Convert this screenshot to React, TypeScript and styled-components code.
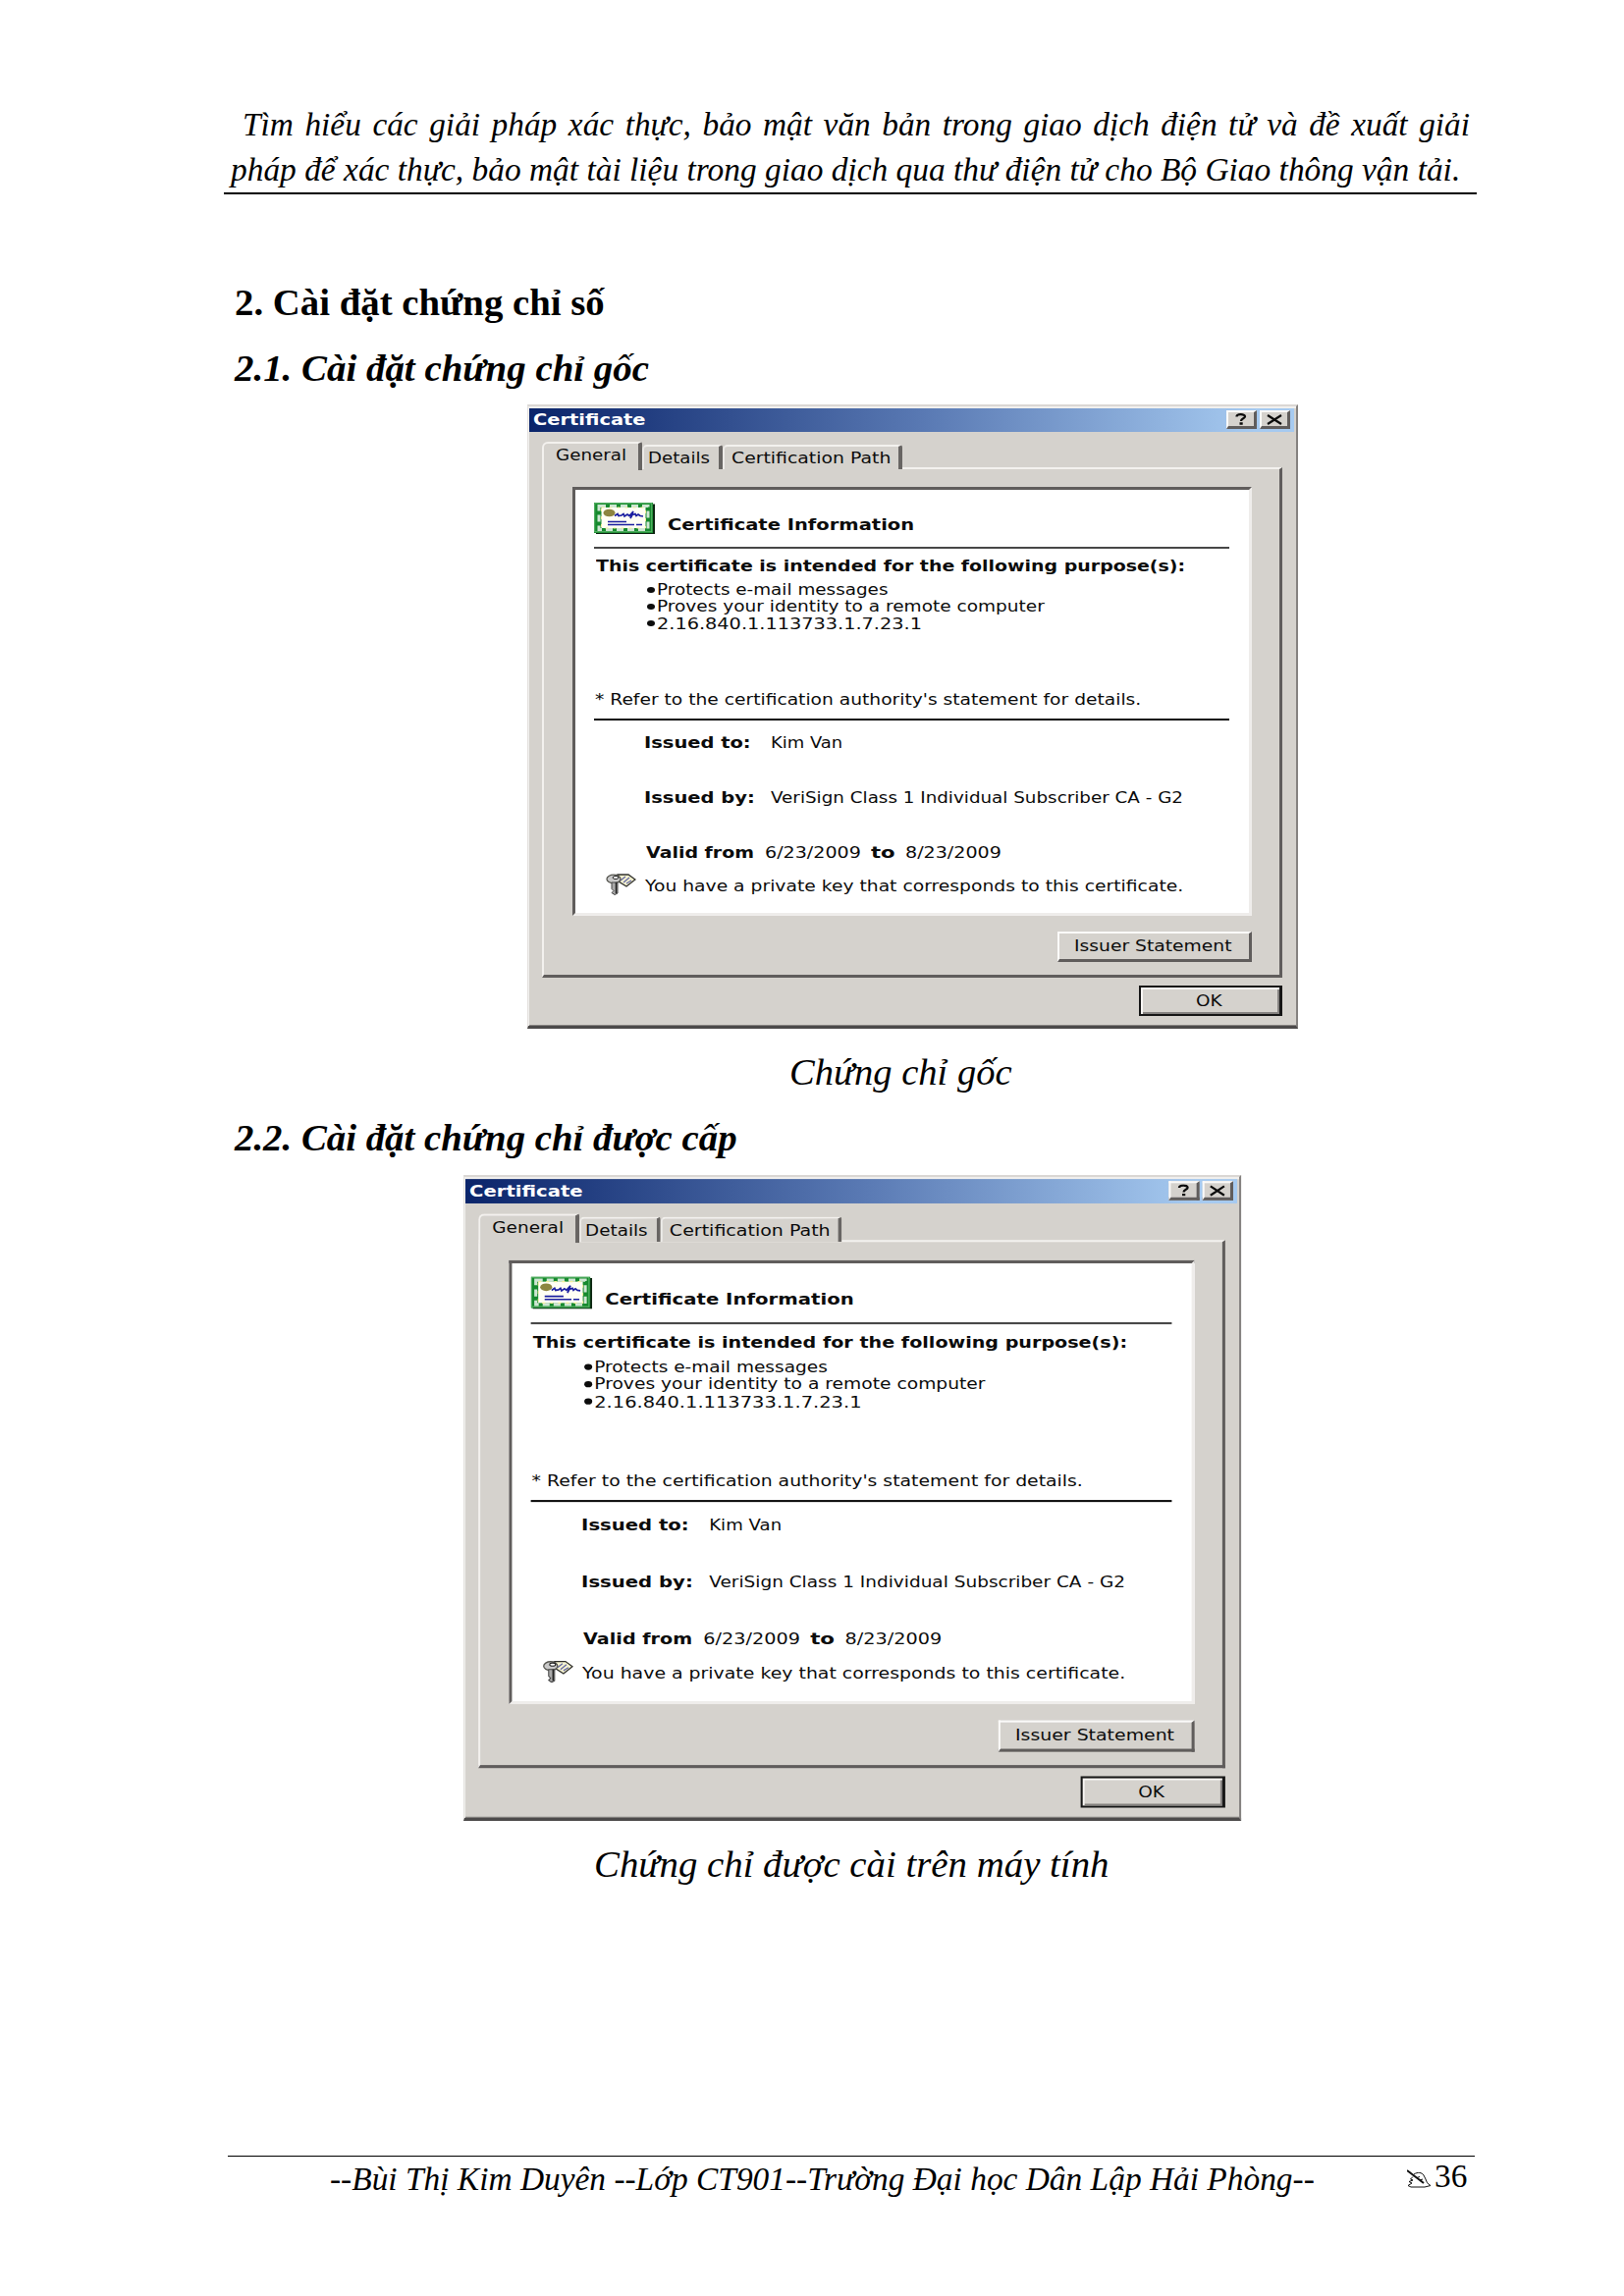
import React, { useLayoutEffect, useRef, useState } from 'react';
import styled, { createGlobalStyle, css } from 'styled-components';

const Global = createGlobalStyle`
  body { margin: 0; background: #fff; }
  * { box-sizing: border-box; }
`;

const Page = styled.main`
  width: 1654px;
  height: 2339px;
  background: #fff;
  color: #000;
  font-family: 'Liberation Serif', 'Times New Roman', serif;
  display: flex;
  flex-direction: column;
  overflow: hidden;
`;

/* ---------- text that fills an exact measure ---------- */

const Measure = styled.span<{ $w: number }>`
  display: block;
  flex: none;
  width: ${(p) => p.$w}px;
  white-space: pre;
  text-align: left;
`;
const Run = styled.span`
  display: inline-block;
  transform-origin: 0 50%;
`;

function Fit({ w, children }: { w: number; children: string }) {
  const ref = useRef<HTMLSpanElement>(null);
  const [k, setK] = useState(1);
  useLayoutEffect(() => {
    if (ref.current) setK(w / ref.current.offsetWidth);
  }, [w, children]);
  return (
    <Measure $w={w}>
      <Run ref={ref} style={{ transform: `scaleX(${k})` }}>{children}</Run>
    </Measure>
  );
}

/* ---------- document ---------- */

const RunningHead = styled.header`
  margin: 104px 150px 0 228px;
  height: 94px;
  border-bottom: 2px solid #000;
  padding: 0 7px 0 7px;
  font-size: 33.33px;
  font-style: italic;
  line-height: 46px;
`;
const Justified = styled.div`
  padding: 0 0 0 12px;
  text-align: justify;
  text-align-last: justify;
  white-space: nowrap;
`;
const Heading = styled.h2<{ $top: number; $italic?: boolean }>`
  margin: ${(p) => p.$top}px 0 0 239px;
  height: 50px;
  line-height: 50px;
  font-size: 38.9px;
  font-weight: bold;
  font-style: ${(p) => (p.$italic ? 'italic' : 'normal')};
`;
const Figure = styled.figure<{ $left: number; $top: number }>`
  margin: ${(p) => p.$top}px 0 0 ${(p) => p.$left}px;
`;
const Stage = styled.div<{ $w: number; $h: number }>`
  width: ${(p) => p.$w}px;
  height: ${(p) => p.$h}px;
`;
const Caption = styled.figcaption<{ $indent: number; $top: number }>`
  margin: ${(p) => p.$top}px 0 0 ${(p) => p.$indent}px;
  height: 50px;
  line-height: 50px;
  font-size: 38.9px;
  font-style: italic;
`;
const Footer = styled.footer`
  margin: auto 152px 98px 232px;
  height: 45px;
  border-top: 1px solid #000;
  display: flex;
  align-items: flex-start;
  padding-left: 104px;
  font-size: 33.33px;
  line-height: 40px;
  font-style: italic;
  padding-top: 3px;
`;
const PageNo = styled.div`
  display: flex;
  gap: 3px;
  margin: -3px 0 0 94px;
  font-style: normal;
  svg { margin-top: 13px; }
`;

/* ---------- dialog ---------- */

const Window = styled.section<{ $sx: number; $sy: number }>`
  width: 785px;
  height: 636px;
  transform: scale(${(p) => p.$sx}, ${(p) => p.$sy});
  transform-origin: 0 0;
  background: #d5d2cd;
  border-style: solid;
  border-width: 2px 2px 3px 1px;
  border-color: #dad7d4 #858280 #4c4a4a #e4e1de;
  box-shadow: inset 1px 2px #f1f0ee, inset 0 -1px #858280;
  display: flex;
  flex-direction: column;
  padding: 2px 2px 0 1px;
  color: #0c0c0c;
  font: 15px/18px 'DejaVu Sans', Verdana, sans-serif;
`;
const TitleBar = styled.div`
  height: 24px;
  flex: none;
  display: flex;
  align-items: center;
  gap: 3px;
  padding: 0 4px 0 4px;
  background: linear-gradient(90deg, #0a246a, #5a7ab4 52%, #a6caf0 95%);
  color: #fff;
  font-weight: bold;
`;
const Spacer = styled.span`
  flex: 1;
`;
const Gap = styled.span`
  flex: none;
  width: 10px;
`;
const raised = css`
  background: #d5d2cd;
  border-style: solid;
  border-color: #fbfaf9 #605d5c #605d5c #fbfaf9;
`;
const Control = styled.button`
  ${raised}
  width: 31px;
  height: 19px;
  margin: 0 0 1px;
  padding: 0;
  border-width: 2px 3px 3px 2px;
  display: flex;
  align-items: center;
  justify-content: center;
`;
const Tabs = styled.div`
  display: flex;
  align-items: flex-end;
  height: 38px;
  flex: none;
  margin-left: 13px;
`;
const Tab = styled.div<{ $w: number; $active?: boolean; $pad: number }>`
  width: ${(p) => p.$w}px;
  height: ${(p) => (p.$active ? 29 : 25)}px;
  padding: 3px 0 0 ${(p) => p.$pad}px;
  border-style: solid;
  border-width: 2px 4px 0 2px;
  border-color: #f3f1ee #686563 transparent ${(p) => (p.$active ? '#f3f1ee' : '#eceae7')};
  border-radius: ${(p) => (p.$active ? '6px 2px 0 0' : '5px 3px 0 0')};
  margin-bottom: ${(p) => (p.$active ? -1 : 0)}px;
  background: #d5d2cd;
  position: relative;
  z-index: 1;
`;
const Sheet = styled.div`
  margin: -2px 12px 0 13px;
  height: 520px;
  flex: none;
  border-style: solid;
  border-width: 2px 3px 3px 2px;
  border-color: #f3f1ee #605d5c #605d5c #f3f1ee;
  padding: 18px 28px 0 29px;
`;
const Paper = styled.div`
  height: 437px;
  background: #fff;
  border-style: solid;
  border-width: 3px;
  border-color: #605d5c #efedeb #efedeb #605d5c;
  padding: 13px 20px 0 19px;
`;
const TitleRow = styled.div`
  display: flex;
  gap: 13px;
  height: 45px;
  font-weight: bold;
  & > span { margin-top: 14px; }
`;
const Rule = styled.div<{ $soft?: boolean; $top?: number }>`
  height: 2px;
  margin-top: ${(p) => p.$top ?? 0}px;
  background: ${(p) => (p.$soft ? '#474747' : '#0c0c0c')};
`;
const Line = styled.div<{ $top: number; $left: number; $bold?: boolean }>`
  display: flex;
  margin: ${(p) => p.$top}px 0 0 ${(p) => p.$left}px;
  height: 18px;
  font-weight: ${(p) => (p.$bold ? 'bold' : 'normal')};
`;
const Bold = styled.b<{ $w: number }>`
  width: ${(p) => p.$w}px;
  flex: none;
`;
const Purposes = styled.ul`
  list-style: none;
  margin: 7px 0 0;
  padding: 0 0 0 54px;
`;
const Purpose = styled.li`
  display: flex;
  align-items: center;
  gap: 2px;
  height: 17.4px;
  line-height: 17.4px;
`;
const Dot = styled.i`
  width: 8px;
  height: 6px;
  margin-bottom: 2px;
  border-radius: 50%;
  background: #0c0c0c;
`;
const KeyRow = styled.div`
  display: flex;
  align-items: flex-start;
  gap: 9px;
  margin: 12px 0 0 12px;
  & > span { margin-top: 4px; }
`;
const Button = styled.button<{ $w: number; $default?: boolean }>`
  ${raised}
  display: flex;
  align-items: center;
  justify-content: center;
  width: ${(p) => p.$w}px;
  height: 31px;
  padding: 0 2px 0 0;
  border-width: 2px 3px 3px 2px;
  font: inherit;
  color: inherit;
  ${(p) =>
    p.$default &&
    css`
      border-color: #161616;
      border-width: 2px 3px 2px 2px;
      box-shadow: inset 2px 2px #f7f5f3, inset -2px -2px #858280;
    `}
`;
const ButtonRow = styled.div<{ $top: number; $right: number }>`
  display: flex;
  justify-content: flex-end;
  margin: ${(p) => p.$top}px ${(p) => p.$right}px 0 0;
`;

const CertIcon = () => (
  <svg width="62" height="32" viewBox="0 0 62 32">
    <rect x="2" y="1.5" width="60" height="30.5" fill="#0c2410" />
    <rect width="60" height="31" fill="#168a2e" />
    <rect x="0.7" y="0.7" width="58" height="29" fill="none" stroke="#5fb56c" />
    <rect x="5" y="3.5" width="50" height="24" fill="none" stroke="#cfe6d3" strokeWidth="3" strokeDasharray="7 4" />
    <rect x="7.5" y="5" width="45" height="21" fill="#fffef4" />
    <rect x="7.5" y="5" width="45" height="21" fill="none" stroke="#f6ef9a" strokeDasharray="3 5" />
    <ellipse cx="15.5" cy="10.5" rx="6" ry="3.8" fill="#8d853f" />
    <path d="M21 13.5l3-2 1 2 3-.5 2-1.5 1 2.500 3-2 2 1.500 4-4.500-3 7 2-3.500 3-1 1 2 2-1.500 2 1.500 3 .5" fill="none" stroke="#1b1fa0" strokeWidth="1.7" />
    <path d="M14 19.500h19M14 22.500h27M43 22.500h6" stroke="#1b1fa0" strokeWidth="1.500" />
  </svg>
);

const KeyIcon = () => (
  <svg width="31" height="22" viewBox="0 0 31 22">
    <path d="M12 1h11l7 5-9 7-8-5z" fill="#f4f2d0" stroke="#30302c" strokeWidth="1.300" />
    <path d="M15 7l5-4M18 9l6-5M21 10l5-3" stroke="#6265a0" strokeWidth="1.200" />
    <ellipse cx="8" cy="5.500" rx="7" ry="4.300" fill="#c9c9c9" stroke="#55554f" strokeWidth="1.300" />
    <ellipse cx="10" cy="4" rx="3" ry="1.500" fill="#fff" stroke="#222" />
    <path d="M6 9h6v11l-3 1.500-3-2 2-2-2-2z" fill="#aaa" stroke="#444" />
    <path d="M10.500 9v11" stroke="#222" strokeWidth="1.500" />
  </svg>
);

const WritingHand = () => (
  <svg width="25" height="19" viewBox="0 0 25 19" fill="none" stroke="#111" strokeWidth="1">
    <path d="M0 1l17 13" strokeWidth="2" />
    <path d="M7 5c4-2.500 8-2 10 1l2 4c1 3 2 5 5 6.500M6 7.500L3.500 10 6 11l-4 1.500L5 14l-4 2.500L4 18h14l6-1.500M10 8.500l3-1M13 11l3-1" />
  </svg>
);

function CertificateDialog({ sx = 1, sy = 1 }: { sx?: number; sy?: number }) {
  return (
    <Window $sx={sx} $sy={sy}>
      <TitleBar>
        <Fit w={114}>Certificate</Fit>
        <Spacer />
        <Control aria-label="Help">
          <svg width="14" height="12" viewBox="0 0 14 12" fill="none" stroke="#0c0c0c" strokeWidth="2.300">
            <path d="M2.500 3.500C2.500.5 11 .5 11 3.300 11 5.500 7 5 7 8M5.500 10.500h3.200" />
          </svg>
        </Control>
        <Control aria-label="Close">
          <svg width="16" height="11" viewBox="0 0 16 11" stroke="#0c0c0c" strokeWidth="2.200">
            <path d="M1 1l14 9M15 1L1 10" />
          </svg>
        </Control>
      </TitleBar>
      <Tabs>
        <Tab $w={102} $pad={12} $active><Fit w={72}>General</Fit></Tab>
        <Tab $w={82} $pad={4}><Fit w={63}>Details</Fit></Tab>
        <Tab $w={183} $pad={7}><Fit w={162}>Certification Path</Fit></Tab>
      </Tabs>
      <Sheet>
        <Paper>
          <TitleRow>
            <CertIcon />
            <Fit w={251}>Certificate Information</Fit>
          </TitleRow>
          <Rule $soft />
          <Line $top={9} $left={2} $bold><Fit w={600}>This certificate is intended for the following purpose(s):</Fit></Line>
          <Purposes>
            <Purpose><Dot /><Fit w={235}>Protects e-mail messages</Fit></Purpose>
            <Purpose><Dot /><Fit w={395}>Proves your identity to a remote computer</Fit></Purpose>
            <Purpose><Dot /><Fit w={270}>2.16.840.1.113733.1.7.23.1</Fit></Purpose>
          </Purposes>
          <Line $top={59} $left={1}><Fit w={556}>* Refer to the certification authority's statement for details.</Fit></Line>
          <Rule $top={10} />
          <Line $top={14} $left={51}>
            <Bold $w={129}><Fit w={109}>Issued to:</Fit></Bold>
            <Fit w={73}>Kim Van</Fit>
          </Line>
          <Line $top={38} $left={51}>
            <Bold $w={129}><Fit w={113}>Issued by:</Fit></Bold>
            <Fit w={420}>VeriSign Class 1 Individual Subscriber CA - G2</Fit>
          </Line>
          <Line $top={38} $left={53}>
            <Bold $w={121}><Fit w={110}>Valid from</Fit></Bold>
            <Fit w={98}>6/23/2009</Fit>
            <Gap />
            <Bold $w={35}><Fit w={24}>to</Fit></Bold>
            <Fit w={98}>8/23/2009</Fit>
          </Line>
          <KeyRow>
            <KeyIcon />
            <Fit w={548}>You have a private key that corresponds to this certificate.</Fit>
          </KeyRow>
        </Paper>
        <ButtonRow $top={16} $right={0}>
          <Button $w={198}><Fit w={161}>Issuer Statement</Fit></Button>
        </ButtonRow>
      </Sheet>
      <ButtonRow $top={8} $right={12}>
        <Button $w={146} $default><Fit w={27}>OK</Fit></Button>
      </ButtonRow>
    </Window>
  );
}

export default function App() {
  return (
    <Page>
      <Global />
      <RunningHead>
        <Justified>Tìm hiểu các giải pháp xác thực, bảo mật văn bản trong giao dịch điện tử và đề xuất giải</Justified>
        <Fit w={1252}>pháp để xác thực, bảo mật tài liệu trong giao dịch qua thư điện tử cho Bộ Giao thông vận tải.</Fit>
      </RunningHead>
      <Heading $top={85}><Fit w={377}>2. Cài đặt chứng chỉ số</Fit></Heading>
      <Heading $top={17} $italic><Fit w={422}>2.1. Cài đặt chứng chỉ gốc</Fit></Heading>
      <Figure $left={537} $top={12}>
        <Stage $w={785} $h={636}><CertificateDialog /></Stage>
        <Caption $top={19} $indent={267}><Fit w={227}>Chứng chỉ gốc</Fit></Caption>
      </Figure>
      <Heading $top={17} $italic><Fit w={512}>2.2. Cài đặt chứng chỉ được cấp</Fit></Heading>
      <Figure $left={472} $top={13}>
        <Stage $w={792} $h={658}><CertificateDialog sx={1.009} sy={1.0346} /></Stage>
        <Caption $top={19} $indent={133}><Fit w={524}>Chứng chỉ được cài trên máy tính</Fit></Caption>
      </Figure>
      <Footer>
        <Fit w={1003}>--Bùi Thị Kim Duyên --Lớp CT901--Trường Đại học Dân Lập Hải Phòng--</Fit>
        <PageNo><WritingHand />36</PageNo>
      </Footer>
    </Page>
  );
}
